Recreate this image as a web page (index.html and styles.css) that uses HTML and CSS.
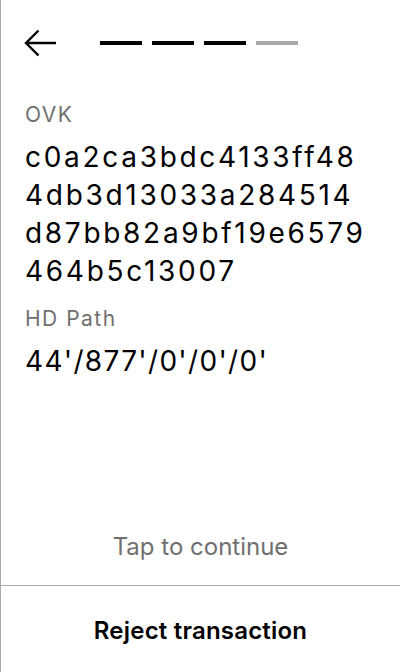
FILE: index.html
```html
<!DOCTYPE html>
<html>
<head>
<meta charset="utf-8">
<link rel="stylesheet" href="styles.css">
</head>
<body>
<div class="screen">
  <div class="top">
    <svg class="back" width="33" height="28" viewBox="0 0 33 28" aria-hidden="true">
      <path d="M32 14H2M14.5 1.5L2 14L14.5 26.5" fill="none" stroke="#000" stroke-width="2.4"/>
    </svg>
    <div class="steps">
      <span class="step on"></span>
      <span class="step on"></span>
      <span class="step on"></span>
      <span class="step"></span>
    </div>
  </div>
  <div class="content">
    <div class="label">OVK</div>
    <div class="value hex">c0a2ca3bdc4133ff48<br>4db3d13033a284514<br>d87bb82a9bf19e6579<br>464b5c13007</div>
    <div class="label">HD Path</div>
    <div class="value path">44'/877'/0'/0'/0'</div>
  </div>
  <div class="tap">Tap to continue</div>
  <div class="reject">Reject transaction</div>
</div>
</body>
</html>
```

FILE: styles.css
```css
html, body {
  margin: 0;
  padding: 0;
  background: #fff;
}
body {
  font-family: Inter, "Noto Sans", sans-serif;
  color: #000;
}
.screen {
  width: 400px;
  height: 672px;
  box-sizing: border-box;
  border-left: 1px solid #aaa;
  display: flex;
  flex-direction: column;
}
.top {
  display: flex;
  align-items: center;
  height: 85px;
  padding-left: 23px;
  box-sizing: border-box;
  gap: 43px;
}
.back {
  display: block;
}
.steps {
  display: flex;
  gap: 10px;
}
.step {
  width: 42px;
  height: 4px;
  background: #aaa;
}
.step.on {
  background: #000;
}
.content {
  padding: 14px 24px 0 24px;
}
.label {
  font-size: 21px;
  line-height: 32px;
  letter-spacing: 1.5px;
  color: #6f6f6f;
}
.value {
  font-size: 28px;
  line-height: 38px;
  margin: 7px 0 13px;
}
.value.hex {
  letter-spacing: 2.7px;
}
.value.path {
  letter-spacing: 1.3px;
}
.tap {
  margin-top: auto;
  text-align: center;
  font-size: 24px;
  line-height: 30px;
  color: #6f6f6f;
  padding-bottom: 23px;
}
.reject {
  border-top: 1px solid #aaa;
  height: 83px;
  padding-top: 3px;
  box-sizing: content-box;
  display: flex;
  align-items: center;
  justify-content: center;
  font-size: 24px;
  font-weight: 600;
  letter-spacing: 0.2px;
}
```
